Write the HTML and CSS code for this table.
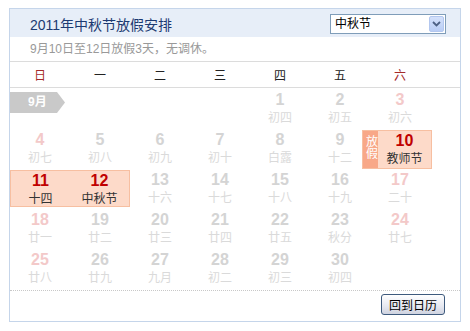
FILE: index.html
```html
<!DOCTYPE html>
<html>
<head>
<meta charset="utf-8">
<link rel="stylesheet" href="styles.css">
</head>
<body>
<div class="cal">
  <div class="head">
    <div class="title">2011年中秋节放假安排</div>
    <div class="select">
      <span class="sel-text">中秋节</span>
      <span class="sel-btn"><svg width="9" height="6" viewBox="0 0 9 6"><path d="M1 1 L4.5 4.5 L8 1" fill="none" stroke="#4d6185" stroke-width="1.8"/></svg></span>
    </div>
  </div>
  <div class="sub">9月10日至12日放假3天，无调休。</div>
  <div class="week">
    <span class="wk red">日</span><span class="wk">一</span><span class="wk">二</span><span class="wk">三</span><span class="wk">四</span><span class="wk">五</span><span class="wk red">六</span>
  </div>
  <div class="grid">
    <div class="month"><span>9月</span></div>
    <div class="cell c5"><b>1</b><i>初四</i></div>
    <div class="cell"><b>2</b><i>初五</i></div>
    <div class="cell we"><b>3</b><i>初六</i></div>

    <div class="cell we"><b>4</b><i>初七</i></div>
    <div class="cell"><b>5</b><i>初八</i></div>
    <div class="cell"><b>6</b><i>初九</i></div>
    <div class="cell"><b>7</b><i>初十</i></div>
    <div class="cell"><b>8</b><i>白露</i></div>
    <div class="cell"><b>9</b><i>十二</i></div>
    <div class="hol-one">
      <span class="tag">放假</span>
      <div class="hcell"><b>10</b><i>教师节</i></div>
    </div>

    <div class="hol-two">
      <div class="hcell"><b>11</b><i>十四</i></div>
      <div class="hcell"><b>12</b><i>中秋节</i></div>
    </div>
    <div class="cell"><b>13</b><i>十六</i></div>
    <div class="cell"><b>14</b><i>十七</i></div>
    <div class="cell"><b>15</b><i>十八</i></div>
    <div class="cell"><b>16</b><i>十九</i></div>
    <div class="cell we"><b>17</b><i>二十</i></div>

    <div class="cell we"><b>18</b><i>廿一</i></div>
    <div class="cell"><b>19</b><i>廿二</i></div>
    <div class="cell"><b>20</b><i>廿三</i></div>
    <div class="cell"><b>21</b><i>廿四</i></div>
    <div class="cell"><b>22</b><i>廿五</i></div>
    <div class="cell"><b>23</b><i>秋分</i></div>
    <div class="cell we"><b>24</b><i>廿七</i></div>

    <div class="cell we"><b>25</b><i>廿八</i></div>
    <div class="cell"><b>26</b><i>廿九</i></div>
    <div class="cell"><b>27</b><i>九月</i></div>
    <div class="cell"><b>28</b><i>初二</i></div>
    <div class="cell"><b>29</b><i>初三</i></div>
    <div class="cell"><b>30</b><i>初四</i></div>
  </div>
  <div class="foot">
    <button class="back">回到日历</button>
  </div>
</div>
</body>
</html>
```
FILE: styles.css
```css
* { box-sizing: border-box; }
body {
  margin: 0;
  padding: 8px 0 0 9px;
  background: #fff;
  font-family: "Liberation Sans", "Noto Sans CJK SC", sans-serif;
}
.cal {
  width: 452px;
  height: 314px;
  border: 1px solid #c5d5ea;
  display: flex;
  flex-direction: column;
}
.head {
  height: 28px;
  background: #e7eef8;
  display: flex;
  align-items: center;
  justify-content: space-between;
  padding: 0 14px 0 20px;
}
.title {
  font-size: 14px;
  color: #1c3a72;
  margin-top: 1px;
}
.select {
  width: 116px;
  height: 20px;
  border: 1px solid #7f9db9;
  background: #fff;
  display: flex;
  align-items: center;
  justify-content: space-between;
  padding: 0 1px 0 4px;
  margin-top: 1px;
}
.sel-text { font-size: 12px; color: #000; line-height: 16px; }
.sel-btn {
  width: 15px;
  height: 16px;
  background: linear-gradient(#d4e1fb, #b9cdf5);
  border: 1px solid #b3c7ef;
  border-radius: 2px;
  display: flex;
  align-items: center;
  justify-content: center;
}
.sub {
  height: 25px;
  border-bottom: 1px solid #dcdcdc;
  padding-left: 20px;
  font-size: 12px;
  color: #999;
  line-height: 24px;
}
.week {
  height: 26px;
  border-bottom: 1px solid #dcdcdc;
  display: grid;
  grid-template-columns: repeat(7, 60px);
  align-items: center;
}
.wk {
  text-align: center;
  font-size: 12px;
  color: #222;
}
.wk.red { color: #a52a2a; }
.grid {
  display: grid;
  grid-template-columns: repeat(7, 60px);
  grid-auto-rows: 40px;
  height: 203px;
  align-content: start;
  border-bottom: 1px dotted #c8c8c8;
}
.month {
  grid-column: 1 / span 4;
  align-self: start;
  margin-top: 4px;
}
.month span {
  display: inline-block;
  width: 55px;
  height: 21px;
  background: #c9c9c9;
  color: #fff;
  font-weight: bold;
  font-size: 12px;
  line-height: 21px;
  padding-left: 18px;
  clip-path: polygon(0 0, 47px 0, 55px 50%, 47px 100%, 0 100%);
}
.cell, .hcell {
  display: flex;
  flex-direction: column;
  align-items: center;
}
.cell b, .hcell b {
  font-weight: bold;
  font-size: 16px;
  line-height: 18px;
  margin-top: 3px;
  color: #d4d4d4;
  font-family: "Liberation Sans", sans-serif;
}
.cell i, .hcell i {
  font-style: normal;
  font-size: 12px;
  line-height: 16px;
  margin-top: 1px;
  color: #dadada;
}
.cell.we b { color: #f3c9c9; }
.hol-one {
  margin: 2px -2px 0 -8px;
  height: 39px;
  display: flex;
  border: 1px solid #f7bfa1;
  background: #fddac9;
}
.tag {
  width: 15px;
  background: #f8a888;
  color: #fff;
  font-size: 12px;
  line-height: 14px;
  writing-mode: vertical-rl;
  text-orientation: upright;
  padding-top: 4px;
  display: flex;
  align-items: center;
  justify-content: flex-start;
}
.hol-one .hcell { flex: 1; }
.hol-two {
  grid-column: 1 / span 2;
  margin-top: 2px;
  height: 37px;
  border: 1px solid #f7bfa1;
  background: #fddac9;
  display: grid;
  grid-template-columns: 1fr 1fr;
}
.hcell b { color: #c00000; margin-top: 1px; }
.hcell i { color: #333; }
.foot {
  flex: 1;
  display: flex;
  justify-content: flex-end;
  align-items: flex-start;
  padding: 3px 15px 0 0;
}
.back {
  width: 64px;
  height: 21px;
  border: 1px solid #3e5a7d;
  border-radius: 3px;
  background: linear-gradient(#ffffff, #e6e8f0 60%, #cfd3e0);
  font-size: 12px;
  color: #000;
  padding: 0;
  font-family: "Noto Sans CJK SC", sans-serif;
  line-height: 18px;
}
```
